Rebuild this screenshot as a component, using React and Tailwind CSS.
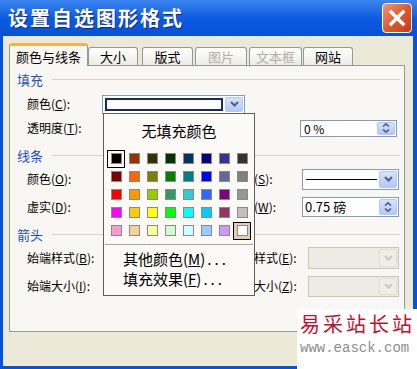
import React from "react";

const palette = [
  ["#000000", "#993300", "#333300", "#003300", "#003366", "#000080", "#333399", "#333333"],
  ["#800000", "#ff6600", "#808000", "#008000", "#008080", "#0000ff", "#666699", "#808080"],
  ["#ff0000", "#ff9900", "#99cc00", "#339966", "#33cccc", "#3366ff", "#800080", "#969696"],
  ["#ff00ff", "#ffcc00", "#ffff00", "#00ff00", "#00ffff", "#00ccff", "#993366", "#c0c0c0"],
  ["#ff99cc", "#ffcc99", "#ffff99", "#ccffcc", "#ccffff", "#99ccff", "#cc99ff", "#ffffff"],
];

const tabs = [
  { name: "颜色与线条", w: "w-[79px]", active: true },
  { name: "大小", w: "w-[50px]" },
  { name: "版式", w: "w-[51px] ml-[4px]" },
  { name: "图片", w: "w-[52px] ml-[2px]", disabled: true },
  { name: "文本框", w: "w-[53px] ml-[2px]", disabled: true },
  { name: "网站", w: "w-[50px] ml-[1px]" },
];

const Label = ({ text, k }) => (
  <span className="whitespace-nowrap">
    {text}(<span className="underline">{k}</span>):
  </span>
);

const ChevronDown = ({ color = "#4d6185" }) => (
  <svg width="9" height="6" viewBox="0 0 9 6">
    <path d="M1 1l3.5 3.5L8 1" fill="none" stroke={color} strokeWidth="2" />
  </svg>
);

const ArrowButton = ({ disabled }) =>
  disabled ? (
    <div className="w-[18px] my-px mr-px flex items-center justify-center rounded-[2px] border border-[#dedcd3] bg-[#efeee9]">
      <ChevronDown color="#cbc9bf" />
    </div>
  ) : (
    <div className="w-[18px] my-px mr-px flex items-center justify-center rounded-[2px] border border-[#b4c8f6] bg-linear-to-b from-[#d6e2fd] to-[#b4c8f6]">
      <ChevronDown />
    </div>
  );

const SpinButton = () => (
  <div className="w-[18px] my-px mr-px flex flex-col items-center justify-center gap-[2px] rounded-[2px] border border-[#b4c8f6] bg-linear-to-b from-[#d6e2fd] to-[#b4c8f6]">
    <svg width="8" height="4" viewBox="0 0 8 4">
      <path d="M1 3.5L4 0.8L7 3.5" fill="none" stroke="#4d6185" strokeWidth="1.6" />
    </svg>
    <svg width="8" height="4" viewBox="0 0 8 4">
      <path d="M1 0.5L4 3.2L7 0.5" fill="none" stroke="#4d6185" strokeWidth="1.6" />
    </svg>
  </div>
);

const Heading = ({ children, className }) => (
  <div className={`flex items-center h-4 pl-[7px] pr-1 ${className}`}>
    <span className="text-[13px] leading-none text-[#1f4fbf]">{children}</span>
    <div className="flex-1 ml-[9px] border-t border-[#d6d3c6]" />
  </div>
);

const ColorPopup = () => (
  <div className="absolute top-full left-0 z-20 w-[152px] h-[183px] flex flex-col border border-[#5f5f5f] bg-[#fbfaf7]">
    <div className="h-[36px] flex items-center justify-center text-[15px] text-black">无填充颜色</div>
    <div className="pl-[3px] grid grid-cols-[repeat(8,18px)] grid-rows-[repeat(5,18px)]">
      {palette.map((row, r) =>
        row.map((c, i) => {
          const first = r === 0 && i === 0;
          const last = r === 4 && i === 7;
          return (
            <div
              key={`${r}-${i}`}
              className={
                first
                  ? "flex items-center justify-center border border-black"
                  : last
                  ? "flex items-center justify-center border border-black bg-[#e3cdb0]"
                  : "flex items-center justify-center"
              }
            >
              <div className="w-[11px] h-[11px] border border-[#8a8a8a]" style={{ backgroundColor: c }} />
            </div>
          );
        })
      )}
    </div>
    <div className="mt-[4px] mx-px border-t border-[#a7a6a0]" />
    <div className="mt-[5px] pl-[19px] h-[20px] flex items-center text-[15px] text-black">
      其他颜色(<span className="underline">M</span>)<span className="tracking-[3px] ml-[2px]">...</span>
    </div>
    <div className="pl-[19px] h-[20px] flex items-center text-[15px] text-black">
      填充效果(<span className="underline">F</span>)<span className="tracking-[3px] ml-[2px]">...</span>
    </div>
  </div>
);

export default function App() {
  return (
    <div className="relative w-[417px] h-[369px] flex flex-col bg-[#0552db] font-['Noto_Sans_CJK_SC',sans-serif] text-black overflow-hidden">
      {/* title bar */}
      <div className="h-[36px] flex items-center justify-between pl-[8px] pr-[5px] bg-linear-to-b from-[#3c86f0] via-[#0a5ce0] to-[#0751d6]">
        <span className="text-[20px] font-bold tracking-[2px] leading-none text-white [text-shadow:1px_1px_#0b2a8a]">
          设置自选图形格式
        </span>
        <div className="w-[30px] h-[30px] flex items-center justify-center rounded-[4px] border border-white bg-linear-to-br from-[#ef9670] via-[#df5a2f] to-[#c23a16]">
          <svg width="18" height="18" viewBox="0 0 18 18">
            <path d="M3 3L15 15M15 3L3 15" stroke="white" strokeWidth="3.6" strokeLinecap="square" />
          </svg>
        </div>
      </div>

      {/* body */}
      <div className="flex-1 ml-[3px] mr-[4px] mb-[3px] bg-[#ece9d8] flex flex-col pt-[7px] pl-[6px]">
        <div className="relative z-10 h-[22px] flex items-end">
          {tabs.map((t) =>
            t.active ? (
              <div
                key={t.name}
                className={`${t.w} h-[23px] -mb-px flex items-center justify-center rounded-t-[3px] border border-b-0 border-[#919b9c] border-t-[3px] border-t-[#f2b44a] bg-[#f8f7f3] text-[13px] leading-none`}
              >
                {t.name}
              </div>
            ) : (
              <div
                key={t.name}
                className={`${t.w} h-[18px] flex items-center justify-center rounded-t-[3px] border border-b-0 border-[#919b9c] bg-linear-to-b from-white to-[#ecebe5] text-[13px] leading-none ${
                  t.disabled ? "text-[#b3b0a2]" : "text-black"
                }`}
              >
                {t.name}
              </div>
            )
          )}
        </div>

        {/* panel */}
        <div className="w-[396px] h-[267px] border border-[#919b9c] bg-[#f8f7f3] flex flex-col text-[12px]">
          <Heading className="mt-[5px]">填充</Heading>

          <div className="flex items-center h-[20px] mt-[7px]">
            <div className="w-[75px] ml-[17px]">
              <Label text="颜色" k="C" />
            </div>
            <div className="relative w-[143px] h-[19px] flex border border-[#7f9db9] bg-white">
              <div className="flex-1 m-[2px] border-2 border-[#1b2a5c]" />
              <ArrowButton />
              <ColorPopup />
            </div>
          </div>

          <div className="flex items-center h-[22px] mt-[3px]">
            <div className="w-[75px] ml-[17px]">
              <Label text="透明度" k="T" />
            </div>
            <div className="w-[198px]" />
            <div className="w-[97px] h-[17px] flex border border-[#7f9db9] bg-white">
              <span className="flex-1 pl-[3px] leading-[15px]">0 %</span>
              <SpinButton />
            </div>
          </div>

          <Heading className="mt-[8px]">线条</Heading>

          <div className="flex items-center h-[22px] mt-[5px]">
            <div className="w-[75px] ml-[17px]">
              <Label text="颜色" k="O" />
            </div>
            <div className="w-[128px]" />
            <div className="w-[70px]">
              <Label text="线型" k="S" />
            </div>
            <div className="ml-[2px] w-[97px] h-[21px] flex border border-[#7f9db9] bg-white">
              <div className="flex-1 flex items-center pl-[3px] pr-[2px]">
                <div className="w-full border-t border-black" />
              </div>
              <ArrowButton />
            </div>
          </div>

          <div className="flex items-center h-[22px] mt-[6px]">
            <div className="w-[75px] ml-[17px]">
              <Label text="虚实" k="D" />
            </div>
            <div className="w-[128px]" />
            <div className="w-[70px]">
              <Label text="粗细" k="W" />
            </div>
            <div className="ml-[2px] w-[97px] h-[20px] flex border border-[#7f9db9] bg-white">
              <span className="flex-1 pl-[2px] text-[13px] leading-[18px]">0.75 磅</span>
              <SpinButton />
            </div>
          </div>

          <Heading className="mt-[8px]">箭头</Heading>

          <div className="flex items-center h-[22px] mt-[5px]">
            <div className="w-[75px] ml-[17px]">
              <Label text="始端样式" k="B" />
            </div>
            <div className="w-[128px]" />
            <div className="w-[70px]">
              <Label text="末端样式" k="E" />
            </div>
            <div className="ml-[8px] w-[91px] h-[22px] flex border border-[#c9c7ba] bg-[#ecebe4]">
              <div className="flex-1" />
              <ArrowButton disabled />
            </div>
          </div>

          <div className="flex items-center h-[22px] mt-[6px]">
            <div className="w-[75px] ml-[17px]">
              <Label text="始端大小" k="I" />
            </div>
            <div className="w-[128px]" />
            <div className="w-[70px]">
              <Label text="末端大小" k="Z" />
            </div>
            <div className="ml-[8px] w-[91px] h-[21px] flex border border-[#c9c7ba] bg-[#ecebe4]">
              <div className="flex-1" />
              <ArrowButton disabled />
            </div>
          </div>
        </div>
      </div>

      {/* watermark */}
      <div className="absolute right-0 bottom-0 w-[120px] h-[60px] bg-white flex flex-col pl-[3px] pt-[3px]">
        <span className="text-[20px] leading-[24px] tracking-[3px] text-[#c4102f]">易采站长站</span>
        <span className="mt-[4px] font-['Liberation_Mono',monospace] text-[14px] leading-[16px] text-[#8c8c8c]">
          www.easck.com
        </span>
      </div>
    </div>
  );
}
